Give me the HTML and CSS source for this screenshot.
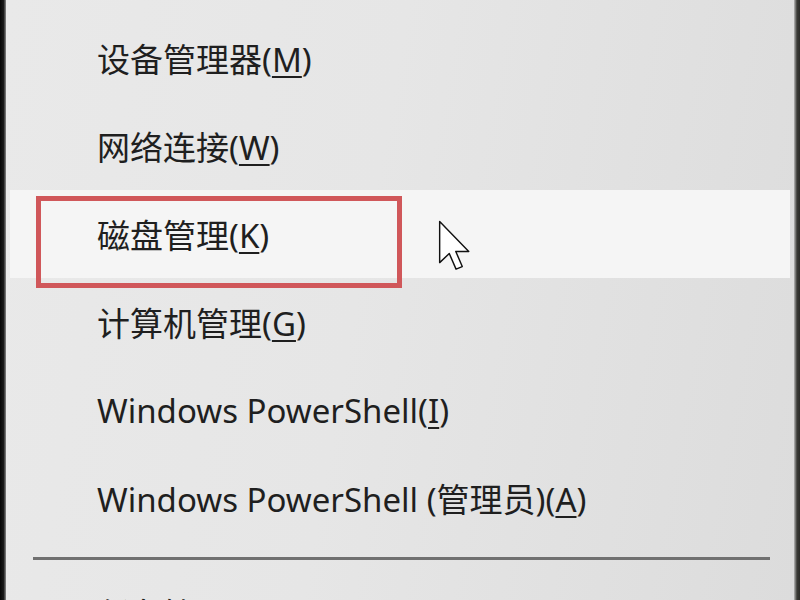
FILE: index.html
```html
<html>
<head>
<meta charset="utf-8">
<link rel="stylesheet" href="styles.css">
</head>
<body>
<div class="screen">
  <div class="edgeLeft"></div>
  <div class="menu">
    <div class="item"><span>设备管理器(<u>M</u>)</span></div>
    <div class="item"><span>网络连接(<u>W</u>)</span></div>
    <div class="item hot"><span>磁盘管理(<u>K</u>)</span></div>
    <div class="item"><span>计算机管理(<u>G</u>)</span></div>
    <div class="item"><span>Windows PowerShell(<u>I</u>)</span></div>
    <div class="item"><span>Windows PowerShell (管理员)(<u>A</u>)</span></div>
    <div class="sep"></div>
    <div class="item"><span>任务管理器(<u>T</u>)</span></div>

    <div class="markBox"></div>
    <svg class="cursor" width="34" height="52" viewBox="0 0 13 20">
      <path d="M0.6 0.6 L0.6 16.4 L4.3 12.9 L6.9 18.9 L9.3 17.9 L6.8 12.1 L11.8 12.1 Z"
        fill="#fff" stroke="#111" stroke-width="0.55" stroke-linejoin="round"/>
    </svg>
  </div>
  <div class="edgeRight"></div>
</div>
</body>
</html>
```

FILE: styles.css
```css
:root {
    --menuGrey: #e3e3e3;
    --hotWhite: #f5f5f5;
    --markRed: #d0575a;
    --textDark: #1f1f1f;
}

body {
  margin: 0;
  overflow: hidden;
}

.screen {
  display: flex;
  width: 800px;
  height: 600px;
  background-color: #d8d8d8;
}

.edgeLeft {
  width: 6px;
  background: linear-gradient(to right, #050505, #1a1a1a 60%, #8a8a8a);
}

.edgeRight {
  width: 6px;
  background: linear-gradient(to right, #b8b8b8, #3a3a36 50%, #2b2b28);
}

.menu {
  position: relative;
  flex: 1;
  padding-top: 14px;
  background: linear-gradient(100deg, #e9e9e9 0%, #e6e6e6 45%, #dcdcdc 100%);
  font-family: "Noto Sans", "Noto Sans CJK SC", sans-serif;
  font-size: 33px;
  color: var(--textDark);
  overflow: hidden;
}

.item {
  display: flex;
  align-items: center;
  height: 88px;
  margin: 0 4px 0 4px;
  padding-left: 87px;
  white-space: nowrap;
}

.item u {
  text-decoration-thickness: 2px;
  text-underline-offset: 4px;
}

.item.hot {
  background-color: var(--hotWhite);
}

.sep {
  height: 3px;
  margin: 15px 24px 9px 27px;
  background-color: #707070;
}

.markBox {
  position: absolute;
  left: 30px;
  top: 196px;
  width: 356px;
  height: 82px;
  border: 5px solid var(--markRed);
}

.cursor {
  position: absolute;
  left: 432px;
  top: 220px;
}
```
